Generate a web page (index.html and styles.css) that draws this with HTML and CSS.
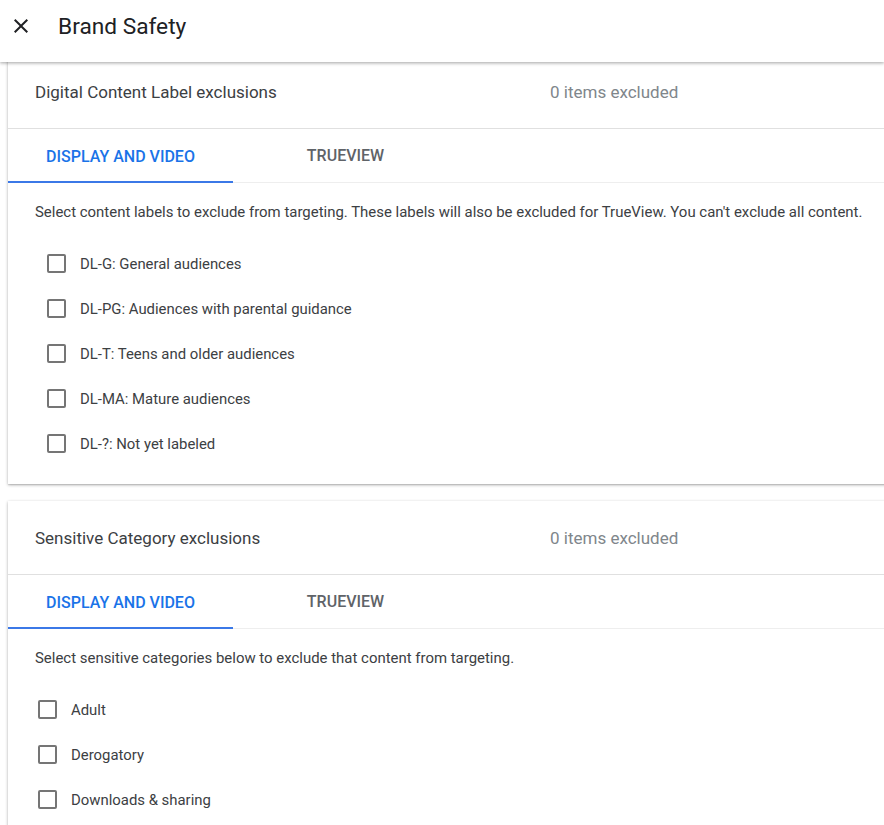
FILE: index.html
```html
<!DOCTYPE html>
<html lang="en">
<head>
<meta charset="utf-8">
<title>Brand Safety</title>
<link rel="stylesheet" href="styles.css">
</head>
<body>
<header class="topbar">
  <button class="close" aria-label="Close">
    <svg width="24" height="24" viewBox="0 0 24 24"><path d="M19 6.41 17.59 5 12 10.59 6.41 5 5 6.41 10.59 12 5 17.59 6.41 19 12 13.41 17.59 19 19 17.59 13.41 12z" fill="#202124"/></svg>
  </button>
  <h1 class="title">Brand Safety</h1>
</header>
<main class="content">
  <section class="card card-first">
    <div class="card-head">
      <span class="card-title">Digital Content Label exclusions</span>
      <span class="card-count">0 items excluded</span>
    </div>
    <div class="tabs">
      <div class="tab active">DISPLAY AND VIDEO</div>
      <div class="tab">TRUEVIEW</div>
    </div>
    <div class="card-body">
      <p class="desc">Select content labels to exclude from targeting. These labels will also be excluded for TrueView. You can't exclude all content.</p>
      <ul class="options">
        <li class="option"><span class="box"></span><span>DL-G: General audiences</span></li>
        <li class="option"><span class="box"></span><span>DL-PG: Audiences with parental guidance</span></li>
        <li class="option"><span class="box"></span><span>DL-T: Teens and older audiences</span></li>
        <li class="option"><span class="box"></span><span>DL-MA: Mature audiences</span></li>
        <li class="option"><span class="box"></span><span>DL-?: Not yet labeled</span></li>
      </ul>
    </div>
  </section>
  <section class="card">
    <div class="card-head">
      <span class="card-title">Sensitive Category exclusions</span>
      <span class="card-count">0 items excluded</span>
    </div>
    <div class="tabs">
      <div class="tab active">DISPLAY AND VIDEO</div>
      <div class="tab">TRUEVIEW</div>
    </div>
    <div class="card-body">
      <p class="desc">Select sensitive categories below to exclude that content from targeting.</p>
      <ul class="options options-narrow">
        <li class="option"><span class="box"></span><span>Adult</span></li>
        <li class="option"><span class="box"></span><span>Derogatory</span></li>
        <li class="option"><span class="box"></span><span>Downloads &amp; sharing</span></li>
      </ul>
    </div>
  </section>
</main>
</body>
</html>
```
FILE: styles.css
```css
html, body {
  margin: 0;
  padding: 0;
  overflow: hidden;
  background: #ffffff;
  font-family: Roboto, "Liberation Sans", Arial, sans-serif;
  color: #3c4043;
}

.topbar {
  position: relative;
  z-index: 2;
  height: 62px;
  box-sizing: border-box;
  padding: 0 0 10px 9px;
  display: flex;
  align-items: center;
  background: #ffffff;
  box-shadow: 0 1px 3px rgba(0, 0, 0, 0.28), 0 2px 4px rgba(0, 0, 0, 0.08);
}

.close {
  width: 24px;
  height: 24px;
  padding: 0;
  border: 0;
  background: none;
  display: flex;
  align-items: center;
  justify-content: center;
}

.title {
  margin: 0 0 0 25px;
  font-size: 22.7px;
  font-weight: 400;
  color: #202124;
}

.content {
  position: relative;
  z-index: 1;
  margin-top: -7px;
  padding-left: 8px;
  display: flex;
  flex-direction: column;
  gap: 17px;
  width: 920px;
}

.card {
  background: #ffffff;
  box-shadow: 0 1px 3px rgba(0, 0, 0, 0.3), 0 1px 1px rgba(0, 0, 0, 0.08);
}

.card-head {
  height: 73px;
  display: grid;
  grid-template-columns: 515px 1fr;
  align-items: center;
  padding-left: 27px;
  border-bottom: 1px solid #e0e0e0;
  font-size: 17px;
}

.card-title {
  color: #3c4043;
}

.card-count {
  color: #80868b;
}

.tabs {
  display: flex;
  height: 53px;
  border-bottom: 1px solid #eeeeee;
}

.tab {
  width: 225px;
  display: flex;
  align-items: center;
  justify-content: center;
  font-size: 16px;
  font-weight: 500;
  color: #5f6368;
  box-sizing: border-box;
}

.tab.active {
  color: #1a73e8;
  border-bottom: 2px solid #3b78e7;
  margin-bottom: -1px;
  padding-top: 2px;
}

.card-body {
  padding: 19px 0 18px 27px;
}

.desc {
  margin: 0;
  font-size: 14.95px;
  line-height: 20px;
  color: #3c4043;
}

.options {
  list-style: none;
  margin: 19px 0 0 0;
  padding: 0 0 0 12px;
}

.options-narrow {
  padding-left: 3px;
}

.option {
  height: 45px;
  display: flex;
  align-items: center;
  gap: 14px;
  font-size: 14.9px;
  color: #3c4043;
}

.box {
  width: 19px;
  height: 19px;
  box-sizing: border-box;
  border: 2px solid #757575;
  border-radius: 2px;
  flex: none;
}
```
